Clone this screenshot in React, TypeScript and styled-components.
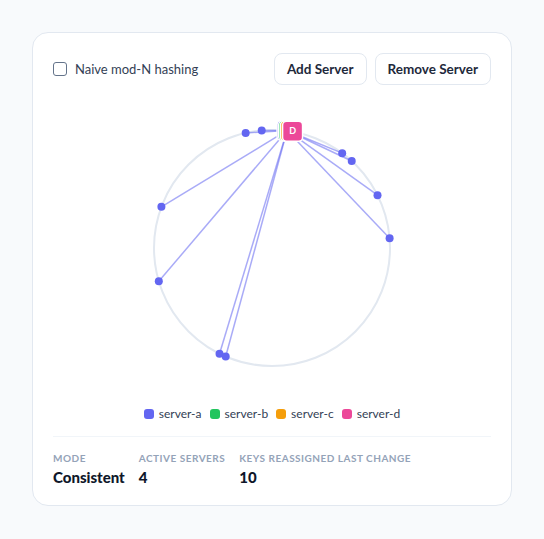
import React from "react";
import styled, { createGlobalStyle } from "styled-components";

const GlobalStyle = createGlobalStyle`
  html, body {
    margin: 0;
    padding: 0;
    background: #f8fafc;
    font-family: "Lato", "Noto Sans", sans-serif;
  }
`;

const SERVERS = [
  { id: "a", name: "server-a", color: "#6366f1", angle: 7.3 },
  { id: "b", name: "server-b", color: "#22c55e", angle: 8.1 },
  { id: "c", name: "server-c", color: "#f59e0b", angle: 9.0 },
  { id: "d", name: "server-d", color: "#ec4899", angle: 10.0 },
];

const KEYS = [347.1, 355, 290.4, 253.6, 206.4, 203.1, 36.5, 42.5, 63.4, 85.3];

const CX = 150;
const CY = 150;
const R = 118;

function polar(angle: number, r = R) {
  const rad = (angle * Math.PI) / 180;
  return { x: CX + r * Math.sin(rad), y: CY - r * Math.cos(rad) };
}

export default function App() {
  const owner = polar(SERVERS[0].angle, 118.5);
  const top = SERVERS[SERVERS.length - 1];

  return (
    <>
      <GlobalStyle />
      <Page>
        <Card>
          <Toolbar>
            <Toggle>
              <Checkbox type="checkbox" />
              Naive mod-N hashing
            </Toggle>
            <Actions>
              <Button>Add Server</Button>
              <Button>Remove Server</Button>
            </Actions>
          </Toolbar>

          <Ring width={300} height={300} viewBox="0 0 300 300">
            <circle cx={CX} cy={CY} r={R} fill="none" stroke="#e2e8f0" strokeWidth={2} />
            {KEYS.map((a, i) => {
              const p = polar(a);
              return (
                <line
                  key={"l" + i}
                  x1={p.x}
                  y1={p.y}
                  x2={owner.x}
                  y2={owner.y}
                  stroke="#6366f1"
                  strokeOpacity={0.55}
                  strokeWidth={1.5}
                />
              );
            })}
            {KEYS.map((a, i) => {
              const p = polar(a);
              return <circle key={"k" + i} cx={p.x} cy={p.y} r={4} fill="#6366f1" />;
            })}
            {SERVERS.map((s) => {
              const p = polar(s.angle, 118.5);
              return (
                <rect
                  key={s.id}
                  x={p.x - 10}
                  y={p.y - 10}
                  width={20}
                  height={20}
                  rx={4}
                  fill={s.color}
                  stroke="#fff"
                  strokeWidth={1.5}
                />
              );
            })}
            {(() => {
              // only the top-most node's letter is visible; the rest sit underneath it
              const p = polar(top.angle, 118.5);
              return (
                <NodeLabel x={p.x} y={p.y + 3}>
                  {top.id.toUpperCase()}
                </NodeLabel>
              );
            })()}
          </Ring>

          <Legend>
            {SERVERS.map((s) => (
              <LegendItem key={s.id}>
                <Swatch $color={s.color} />
                {s.name}
              </LegendItem>
            ))}
          </Legend>

          <Stats>
            <Stat>
              <StatLabel>Mode</StatLabel>
              <StatValue>Consistent</StatValue>
            </Stat>
            <Stat>
              <StatLabel>Active servers</StatLabel>
              <StatValue>4</StatValue>
            </Stat>
            <Stat>
              <StatLabel>Keys reassigned last change</StatLabel>
              <StatValue>10</StatValue>
            </Stat>
          </Stats>
        </Card>
      </Page>
    </>
  );
}

const Page = styled.div`
  padding: 32px;
`;

const Card = styled.div`
  background: #fff;
  border: 1px solid #e2e8f0;
  border-radius: 16px;
  padding: 20px 20px 18px;
  display: flex;
  flex-direction: column;
`;

const Toolbar = styled.div`
  display: flex;
  justify-content: space-between;
  align-items: center;
`;

const Toggle = styled.label`
  display: flex;
  align-items: center;
  gap: 8px;
  font-size: 13px;
  color: #334155;
`;

const Checkbox = styled.input`
  appearance: none;
  margin: 0;
  width: 14px;
  height: 14px;
  border: 1px solid #64748b;
  border-radius: 3px;
  background: #fff;
`;

const Actions = styled.div`
  display: flex;
  gap: 8px;
`;

const Button = styled.button`
  height: 32px;
  padding: 0 12px;
  border: 1px solid #e2e8f0;
  border-radius: 8px;
  background: #fff;
  font-family: inherit;
  font-size: 13.5px;
  font-weight: 700;
  color: #1e293b;
`;

const Ring = styled.svg`
  display: block;
  margin: 13px auto 0;
`;

const NodeLabel = styled.text`
  fill: #fff;
  font-size: 9px;
  font-weight: 700;
  text-anchor: middle;
`;

const Legend = styled.div`
  display: flex;
  justify-content: center;
  gap: 8px;
  margin-top: 8px;
  font-size: 12px;
  line-height: 16px;
  color: #334155;
`;

const LegendItem = styled.div`
  display: flex;
  align-items: center;
  gap: 5px;
`;

const Swatch = styled.span<{ $color: string }>`
  width: 10px;
  height: 10px;
  border-radius: 3px;
  background: ${({ $color }) => $color};
`;

const Stats = styled.div`
  display: flex;
  gap: 14px;
  margin-top: 14px;
  padding-top: 14px;
  border-top: 1px solid #f1f5f9;
`;

const Stat = styled.div`
  display: flex;
  flex-direction: column;
  gap: 2px;
`;

const StatLabel = styled.div`
  font-size: 10px;
  line-height: 14px;
  font-weight: 700;
  letter-spacing: 0.05em;
  text-transform: uppercase;
  color: #94a3b8;
`;

const StatValue = styled.div`
  font-size: 15px;
  line-height: 20px;
  font-weight: 900;
  color: #0f172a;
`;
